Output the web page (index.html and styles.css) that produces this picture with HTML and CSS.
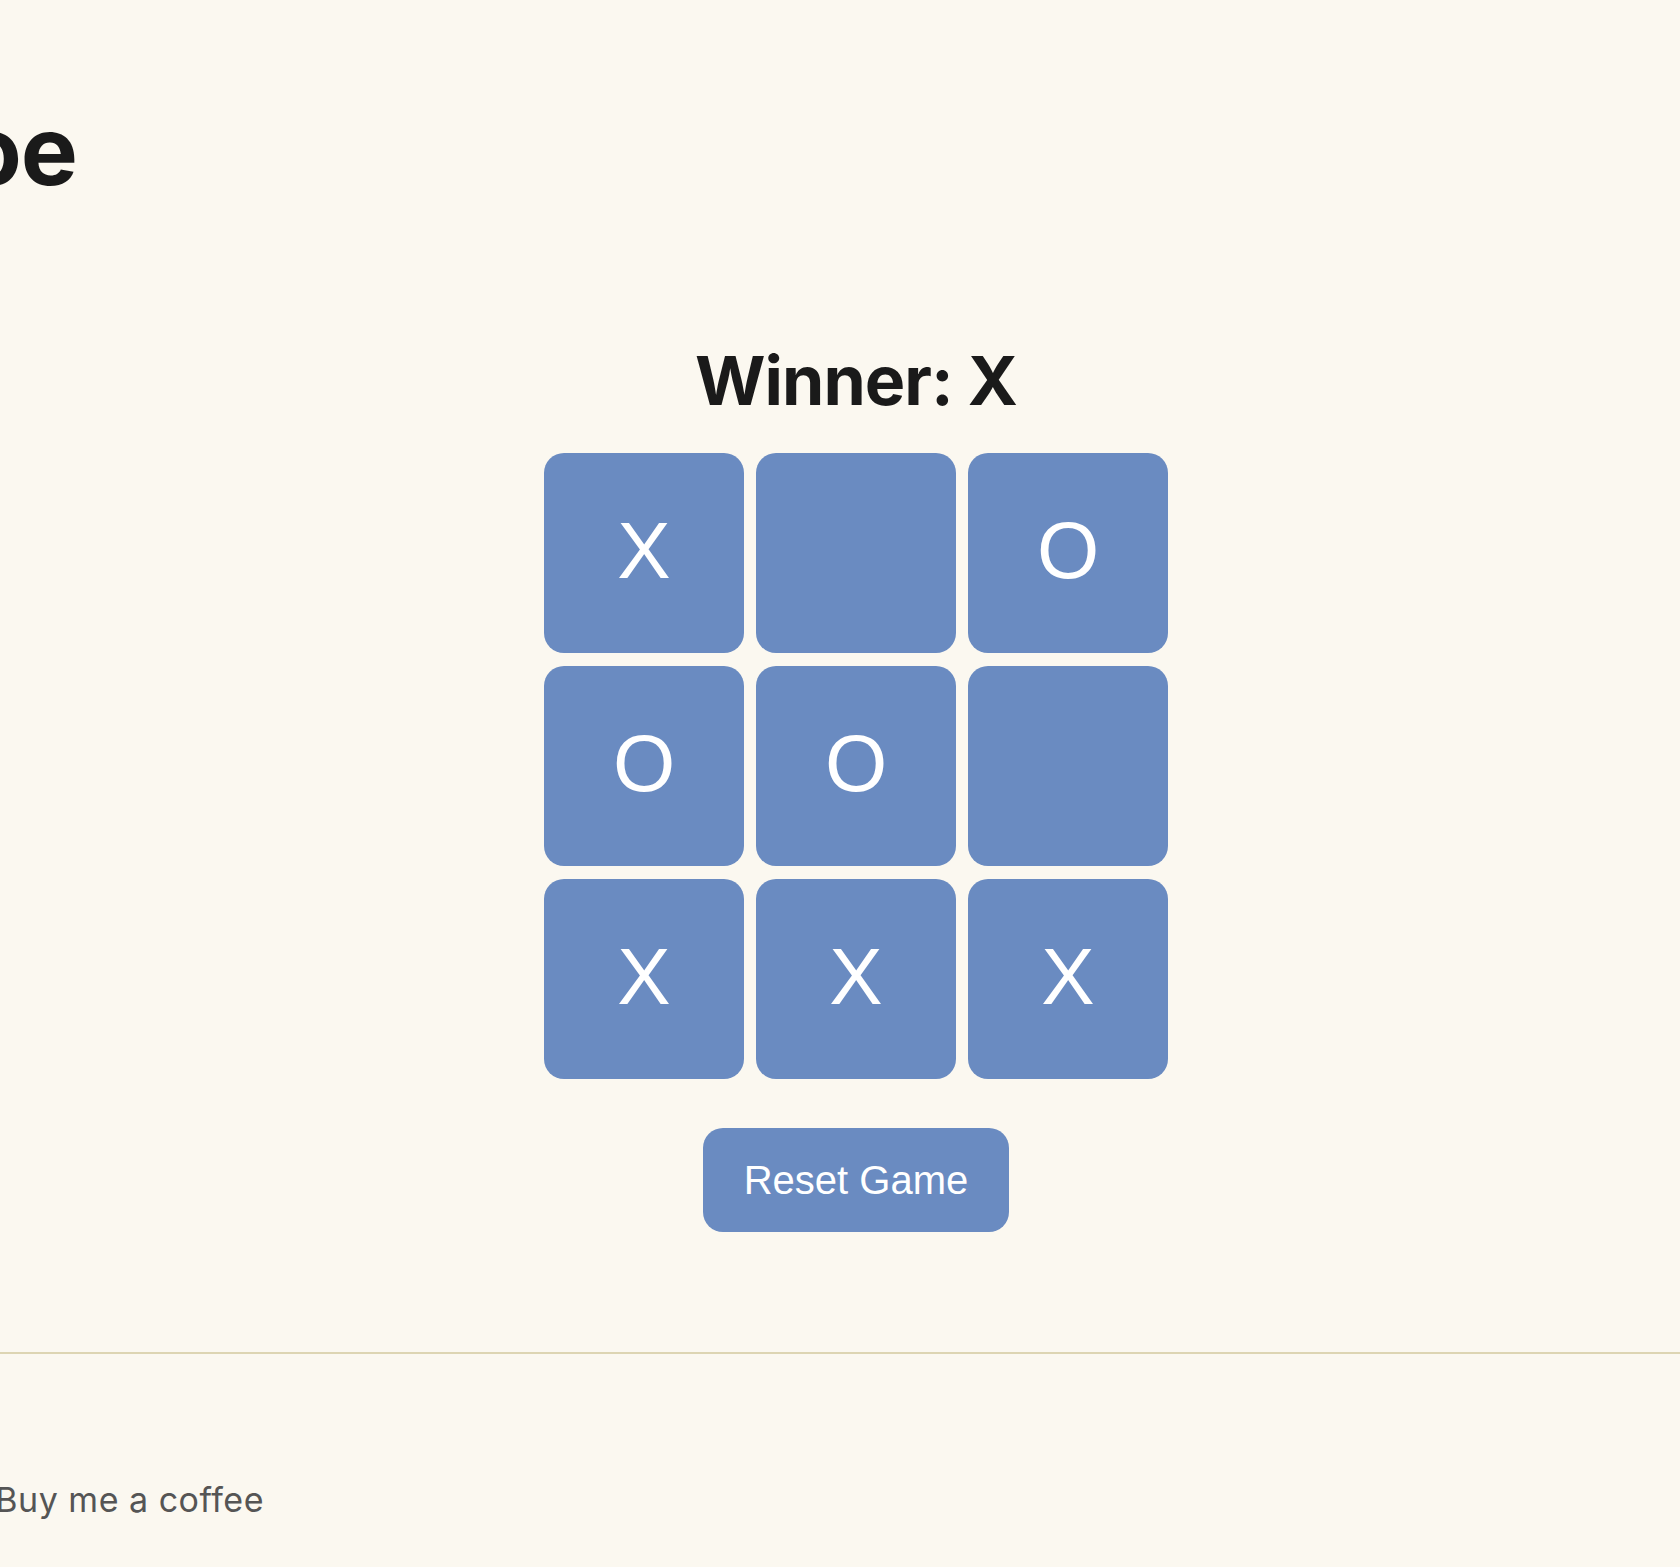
FILE: index.html
```html
<!DOCTYPE html>
<html lang="en">
<head>
<meta charset="utf-8">
<title>Tic Tac Toe</title>
<link rel="stylesheet" href="styles.css">
</head>
<body>
  <header class="site-header">
    <h1 class="site-title">Tic Tac Toe</h1>
  </header>
  <main class="game">
    <h2 class="status">Winner: X</h2>
    <div class="board">
      <div class="cell">X</div>
      <div class="cell"></div>
      <div class="cell">O</div>
      <div class="cell">O</div>
      <div class="cell">O</div>
      <div class="cell"></div>
      <div class="cell">X</div>
      <div class="cell">X</div>
      <div class="cell">X</div>
    </div>
    <button class="reset" type="button">Reset Game</button>
  </main>
  <footer class="site-footer">
    <div class="footer-links">
      <a class="coffee" href="#">Buy me a coffee</a>
    </div>
  </footer>
</body>
</html>
```

FILE: styles.css
```css
html, body {
  margin: 0;
  padding: 0;
}

body {
  background: #fbf8f0;
  color: #1a1a1a;
  font-family: Inter, "Noto Sans", sans-serif;
  min-height: 1567px;
  overflow: hidden;
}

.site-header {
  display: flex;
  justify-content: flex-end;
  width: 77px;
  padding-top: 102px;
}

.site-title {
  flex-shrink: 0;
  margin: 0;
  font-size: 96px;
  line-height: 96px;
  font-weight: 700;
  letter-spacing: -1px;
  white-space: nowrap;
}

.game {
  display: flex;
  flex-direction: column;
  align-items: center;
  padding-left: 32px;
  padding-top: 148px;
}

.status {
  margin: 0;
  font-size: 68px;
  line-height: 68px;
  font-weight: 700;
  letter-spacing: -1px;
}

.board {
  display: grid;
  grid-template-columns: repeat(3, 200px);
  grid-template-rows: repeat(3, 200px);
  column-gap: 12px;
  row-gap: 13px;
  margin-top: 39px;
}

.cell {
  display: flex;
  align-items: center;
  justify-content: center;
  padding-bottom: 4px;
  box-sizing: border-box;
  background: #6a8bc1;
  border-radius: 20px;
  color: #ffffff;
  font-family: "Liberation Sans", Arial, sans-serif;
  font-size: 80px;
}

.reset {
  margin-top: 49px;
  padding: 29px 41px;
  border: none;
  border-radius: 20px;
  background: #6a8bc1;
  color: #ffffff;
  font-family: "Liberation Sans", Arial, sans-serif;
  font-size: 40px;
  line-height: 46px;
}

.site-footer {
  margin-top: 120px;
  border-top: 2px solid #ddd5b3;
}

.footer-links {
  display: flex;
  justify-content: flex-end;
  width: 264px;
  padding-top: 129px;
}

.coffee {
  flex-shrink: 0;
  color: #555555;
  text-decoration: none;
  font-size: 34px;
  line-height: 34px;
  letter-spacing: 0.5px;
  white-space: nowrap;
}
```
